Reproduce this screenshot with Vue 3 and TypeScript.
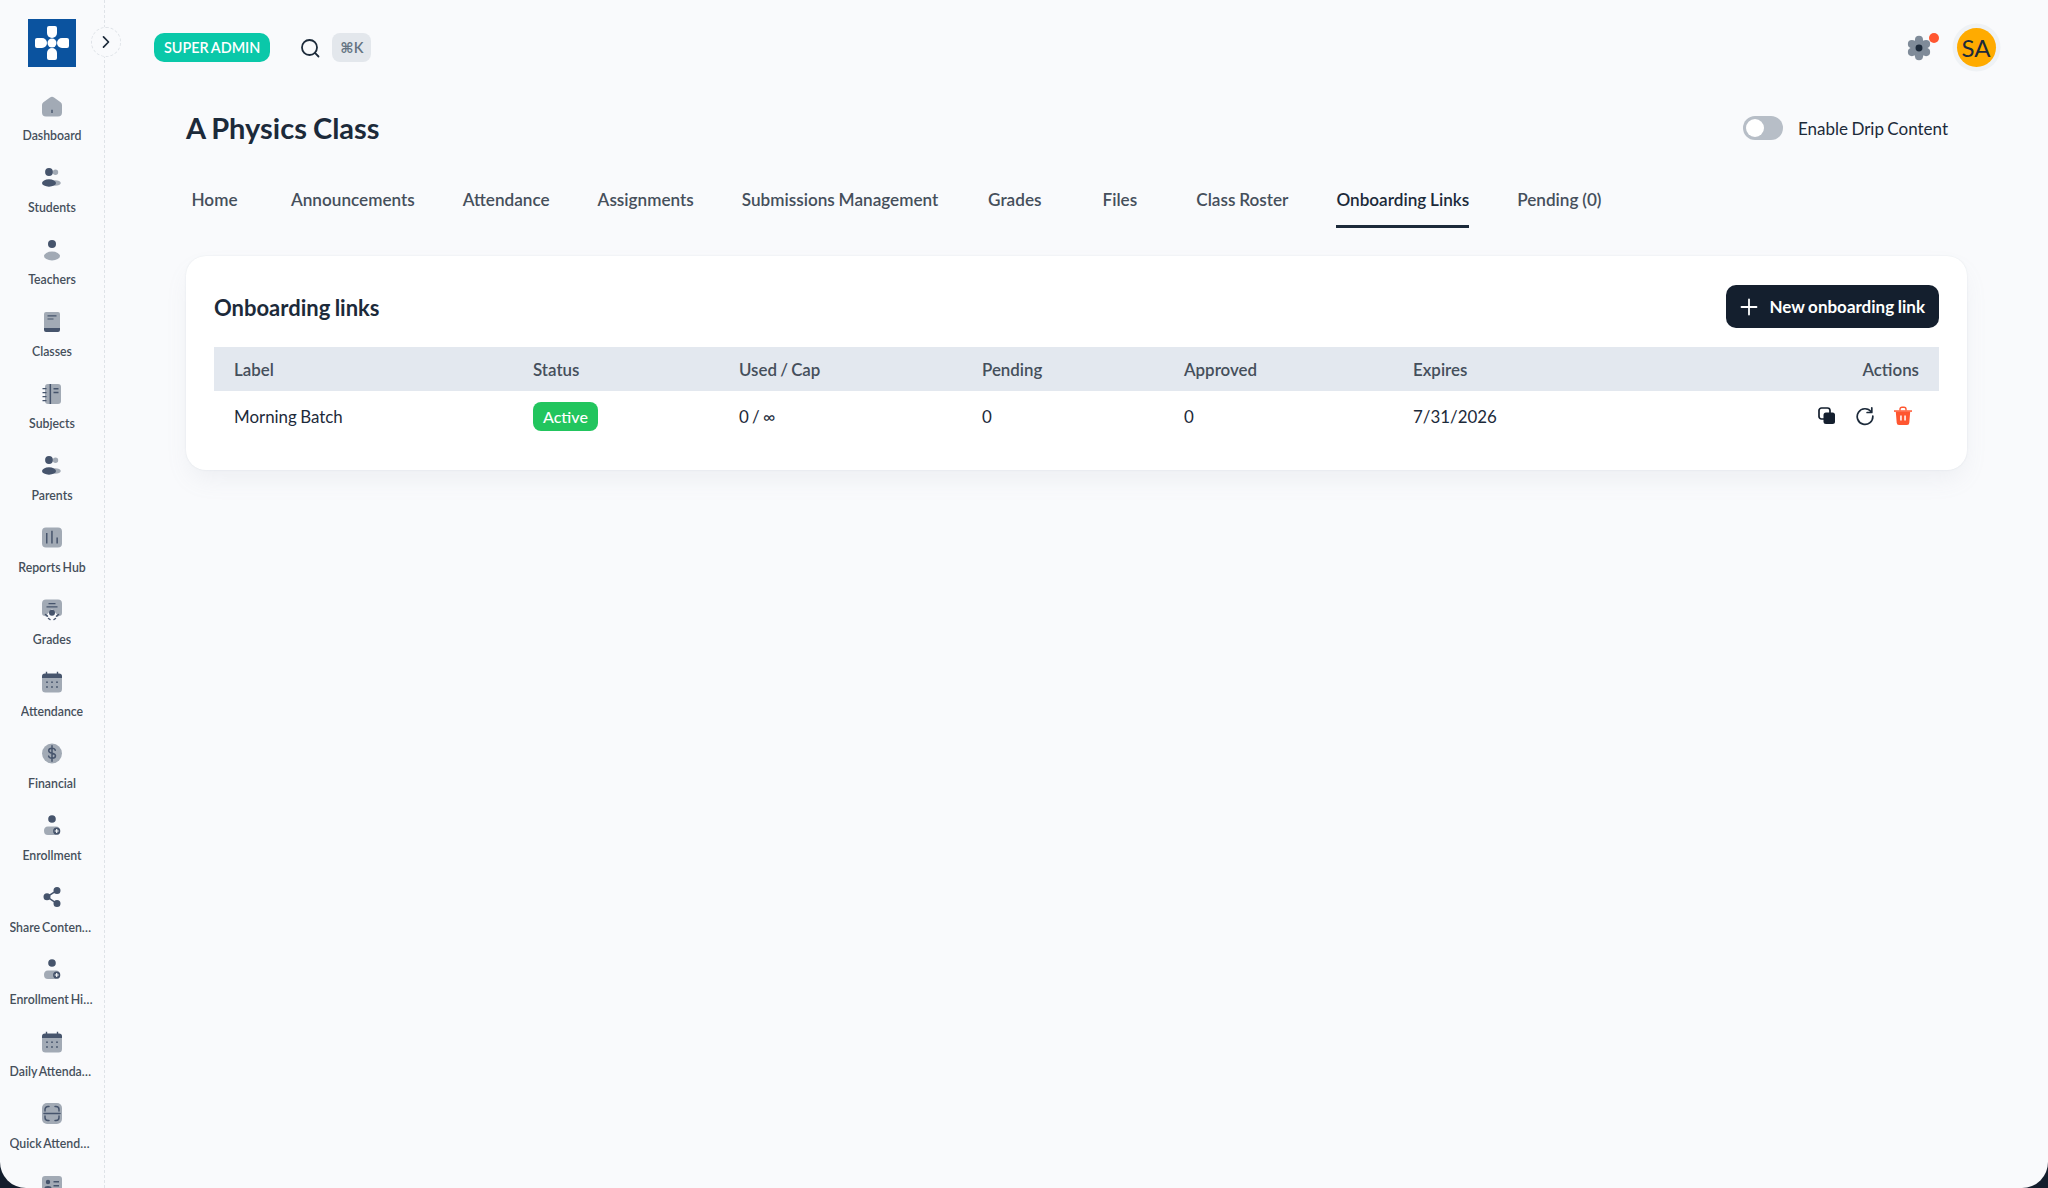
<script setup lang="ts">
interface NavItem {
  label: string
  light?: string
  dark?: string
  line?: string
  cut?: string
}

const dot = (cx: number, cy: number, r: number, ry = r) =>
  `M${cx - r} ${cy}a${r} ${ry} 0 1 0 ${r * 2} 0a${r} ${ry} 0 1 0 ${-r * 2} 0Z`

const people = {
  light: dot(15.5, 6.3, 2.7) + dot(15.2, 17, 5.6, 2.8),
  dark: dot(9, 6, 3.9) + dot(9, 17, 7, 3.7),
}
const enroll = {
  light: 'M8 12.5h8a4.2 4.2 0 0 1 4 4.2a4.2 4.2 0 0 1-4 4.3H8a4.2 4.2 0 0 1-4-4.3a4.2 4.2 0 0 1 4-4.2Z',
  dark: dot(12, 5, 3.8) + dot(16.7, 17, 3.6),
  cut: 'M16.1 15h1.2v1.4h1.4v1.2h-1.4V19h-1.2v-1.4h-1.4v-1.2h1.4Z',
}
const calendar = {
  light: 'M5 4h14a3 3 0 0 1 3 3v12a3.5 3.5 0 0 1-3.5 3.5h-13A3.5 3.5 0 0 1 2 19V7a3 3 0 0 1 3-3Z',
  dark:
    'M2 8V6.5A3 3 0 0 1 5 3.5h.8V1.8h1.4v1.7h9.6V1.8h1.4v1.7h.8a3 3 0 0 1 3 3V8Z' +
    dot(7, 12.2, 0.9) + dot(12, 12.2, 0.9) + dot(17, 12.2, 0.9) +
    dot(7, 17, 0.9) + dot(12, 17, 0.9) + dot(17, 17, 0.9),
}

const navItems: NavItem[] = [
  {
    label: 'Dashboard',
    light: 'M10 3.6a3.2 3.2 0 0 1 4 0l6.6 4.6A3.4 3.4 0 0 1 22 11v7.5a4 4 0 0 1-4 4H6a4 4 0 0 1-4-4V11a3.4 3.4 0 0 1 1.4-2.8Z',
    dark: 'M11.3 15.8h1.4v3.2h-1.4Z',
  },
  { label: 'Students', ...people },
  { label: 'Teachers', light: dot(12, 18, 8, 4.4), dark: dot(12, 6, 4) },
  {
    label: 'Classes',
    light: 'M6 2h12a2 2 0 0 1 2 2v15H4V4a2 2 0 0 1 2-2Z',
    dark: 'M7.5 5.2h9v1.2h-9ZM7.5 8.4h6v1.2h-6ZM4 18h16v2a2 2 0 0 1-2 2H6a2 2 0 0 1-2-2Z',
  },
  {
    label: 'Subjects',
    light: 'M8 2h10a3 3 0 0 1 3 3v14a3 3 0 0 1-3 3H8a3 3 0 0 1-3-3V5a3 3 0 0 1 3-3Z',
    dark: 'M9.6 2h1.5v20H9.6ZM13.5 6h5v1.4h-5ZM13.5 9.8h5v1.4h-5ZM2.5 6h4v1.3h-4ZM2.5 10h4v1.3h-4ZM2.5 14h4v1.3h-4ZM2.5 18h4v1.3h-4Z',
  },
  { label: 'Parents', ...people },
  {
    label: 'Reports Hub',
    light: 'M6 1.5h12a4 4 0 0 1 4 4v12a4 4 0 0 1-4 4H6a4 4 0 0 1-4-4v-12a4 4 0 0 1 4-4Z',
    dark: 'M6 7h1.5v10.5H6ZM11.2 4.8h1.5v12.7h-1.5ZM16.4 11.5h1.5v6h-1.5Z',
  },
  {
    label: 'Grades',
    light: 'M6 1.5h12a4 4 0 0 1 4 4v9.5a3 3 0 0 1-3 3l-2 1v-2.5L12 11l-5 5.500V19l-2-1a3 3 0 0 1-3-3V5.500a4 4 0 0 1 4-4Z',
    dark: 'M8.500 5h7v1.200h-7ZM6.500 8.300h11v1.200h-11Z' + dot(12, 14.800, 3),
    line: 'M5.500 16.500l2 1.600M18.500 16.500l-2 1.600M8.500 20.500l1.500 1M15.500 20.500l-1.500 1',
  },
  { label: 'Attendance', ...calendar },
  {
    label: 'Financial',
    light: dot(12, 11.5, 10),
    line: 'M15.300 8.300c-.4-1.300-1.700-2-3.300-2c-1.900 0-3.300 1-3.300 2.500c0 3.400 6.800 1.500 6.800 5c0 1.500-1.500 2.500-3.500 2.500c-1.700 0-3-.8-3.400-2.200M12 3.800v15.500',
  },
  { label: 'Enrollment', ...enroll },
  {
    label: 'Share Content Links',
    dark: dot(17, 4.4, 3.5) + dot(17, 17.6, 3.5) + dot(7, 10.800, 3.5),
    line: 'M17 4.400L7 10.800L17 17.600',
  },
  { label: 'Enrollment History', ...enroll },
  { label: 'Daily Attendance', ...calendar },
  {
    label: 'Quick Attendance',
    light: 'M7 1h10a5 5 0 0 1 5 5v11a5 5 0 0 1-5 5H7a5 5 0 0 1-5-5V6a5 5 0 0 1 5-5Z',
    line: 'M9 4.500H8a3 3 0 0 0-3 3v1.500M15 4.500h1a3 3 0 0 1 3 3v1.500M9 18.500H8a3 3 0 0 1-3-3V14M15 18.500h1a3 3 0 0 0 3-3V14M4 11.500h16',
  },
  {
    label: 'ID Cards',
    light: 'M5 2h14a3 3 0 0 1 3 3v12a3 3 0 0 1-3 3H5a3 3 0 0 1-3-3V5a3 3 0 0 1 3-3Z',
    dark: dot(8, 8, 2.200) + dot(8, 14, 3.500, 2) + 'M13.500 7h5.500v1.400h-5.500ZM13.500 11h5.500v1.400h-5.500Z',
  },
]

const tabs = [
  'Home',
  'Announcements',
  'Attendance',
  'Assignments',
  'Submissions Management',
  'Grades',
  'Files',
  'Class Roster',
  'Onboarding Links',
  'Pending (0)',
]
const activeTab = 'Onboarding Links'

const gearPetals = [0, 60, 120, 180, 240, 300].map((deg) => {
  const rad = (deg * Math.PI) / 180
  return { x: 12 + 7.6 * Math.sin(rad), y: 12 - 7.6 * Math.cos(rad) }
})
</script>

<template>
  <div class="app">
    <aside class="sidebar">
      <div class="logo">
        <svg width="48" height="48" viewBox="0 0 48 48">
          <rect width="48" height="48" fill="#0b539f" />
          <g fill="#fff">
            <circle cx="24" cy="24" r="4.500" />
            <path d="M21 7h6a2 2 0 0 1 2 2v5a5 5 0 0 1-10 0V9a2 2 0 0 1 2-2Z" />
            <path d="M21 41h6a2 2 0 0 0 2-2v-5a5 5 0 0 0-10 0v5a2 2 0 0 0 2 2Z" />
            <path d="M9 19h5a5 5 0 0 1 0 10H9a2 2 0 0 1-2-2v-6a2 2 0 0 1 2-2Z" />
            <path d="M39 19h-5a5 5 0 0 0 0 10h5a2 2 0 0 0 2-2v-6a2 2 0 0 0-2-2Z" />
          </g>
        </svg>
      </div>
      <button class="collapse" type="button">
        <svg width="12" height="14" viewBox="0 0 12 14">
          <path d="M3.500 1.800L8.500 7L3.500 12.200" fill="none" stroke="#1c2a3a" stroke-width="1.700" stroke-linecap="round" stroke-linejoin="round" />
        </svg>
      </button>
      <nav class="nav">
        <a v-for="item in navItems" :key="item.label" class="nav-item">
          <svg class="nav-icon" width="24" height="24" viewBox="0 0 24 24">
            <path v-if="item.light" :d="item.light" fill="#a2aab5" />
            <path v-if="item.dark" :d="item.dark" fill="#46546c" />
            <path v-if="item.line" :d="item.line" fill="none" stroke="#46546c" stroke-width="1.500" stroke-linecap="round" />
            <path v-if="item.cut" :d="item.cut" fill="#f9fafc" />
          </svg>
          <span class="nav-label">{{ item.label }}</span>
        </a>
      </nav>
    </aside>

    <div class="main">
      <header class="topbar">
        <span class="role">SUPER ADMIN</span>
        <button class="search" type="button">
          <svg width="24" height="24" viewBox="0 0 24 24">
            <circle cx="11.500" cy="11.500" r="7.500" fill="none" stroke="#1c2a3a" stroke-width="1.800" />
            <path d="M17.200 17.200L20.500 20.500" stroke="#1c2a3a" stroke-width="1.800" stroke-linecap="round" />
          </svg>
        </button>
        <kbd class="shortcut">⌘K</kbd>
        <div class="topbar-right">
          <span class="settings">
            <svg width="26" height="26" viewBox="0 0 24 24">
              <circle cx="12" cy="12" r="8" fill="#7f8b99" />
              <circle v-for="(p, i) in gearPetals" :key="i" :cx="p.x" :cy="p.y" r="3.700" fill="#7f8b99" />
              <circle cx="12" cy="12" r="3.200" fill="#1c2a3a" />
            </svg>
            <i class="settings-dot"></i>
          </span>
          <span class="avatar">SA</span>
        </div>
      </header>

      <main class="page">
        <div class="title-row">
          <h1 class="title">A Physics Class</h1>
          <label class="drip">
            <span class="switch"><i></i></span>
            Enable Drip Content
          </label>
        </div>

        <div class="tabs">
          <a v-for="tab in tabs" :key="tab" class="tab" :class="{ active: tab === activeTab }">{{ tab }}</a>
        </div>

        <section class="card">
          <div class="card-head">
            <h2>Onboarding links</h2>
            <button class="new-link" type="button">
              <svg width="18" height="18" viewBox="0 0 18 18">
                <path d="M9 1.500v15M1.500 9h15" stroke="#fff" stroke-width="1.800" stroke-linecap="round" />
              </svg>
              New onboarding link
            </button>
          </div>
          <table class="links">
            <colgroup>
              <col style="width: 299px" />
              <col style="width: 206px" />
              <col style="width: 243px" />
              <col style="width: 202px" />
              <col style="width: 229px" />
              <col />
              <col style="width: 200px" />
            </colgroup>
            <thead>
              <tr>
                <th>Label</th>
                <th>Status</th>
                <th>Used / Cap</th>
                <th>Pending</th>
                <th>Approved</th>
                <th>Expires</th>
                <th class="right">Actions</th>
              </tr>
            </thead>
            <tbody>
              <tr>
                <td>Morning Batch</td>
                <td><span class="status">Active</span></td>
                <td>0 / ∞</td>
                <td>0</td>
                <td>0</td>
                <td>7/31/2026</td>
                <td>
                  <div class="actions">
                    <button type="button">
                      <svg width="20" height="20" viewBox="0 0 20 20">
                        <rect x="2" y="2" width="11" height="11" rx="2.500" fill="none" stroke="#141f2e" stroke-width="1.700" />
                        <rect x="6.500" y="6.500" width="11.500" height="11.500" rx="2.500" fill="#141f2e" />
                      </svg>
                    </button>
                    <button type="button">
                      <svg width="20" height="20" viewBox="0 0 20 20">
                        <path d="M16.200 5.800A7.800 7.800 0 1 0 17.800 10" fill="none" stroke="#1c2a3a" stroke-width="1.700" stroke-linecap="round" />
                        <path d="M16.800 1.800v4.700h-4.700" fill="none" stroke="#1c2a3a" stroke-width="1.700" stroke-linecap="round" stroke-linejoin="round" />
                      </svg>
                    </button>
                    <button type="button">
                      <svg width="20" height="20" viewBox="0 0 20 20">
                        <path d="M7 4.500V3.200a2 2 0 0 1 2-2h2a2 2 0 0 1 2 2v1.300" fill="none" stroke="#ff5630" stroke-width="1.400" />
                        <path d="M1 4.300h18v1.500H1Z" fill="#ff5630" />
                        <path d="M2.800 5.800h14.400l-.9 11a2.300 2.300 0 0 1-2.300 2.200H6a2.300 2.300 0 0 1-2.300-2.200Z" fill="#ff5630" />
                        <path d="M7.200 9.500h1.500v5H7.200ZM11.300 9.500h1.500v5h-1.500Z" fill="#fff" />
                      </svg>
                    </button>
                  </div>
                </td>
              </tr>
            </tbody>
          </table>
        </section>
      </main>
    </div>
  </div>
</template>

<style>
html,
body {
  margin: 0;
  height: 100%;
  background: #141e2d;
}
</style>

<style scoped>
.app {
  display: flex;
  position: relative;
  height: 100vh;
  overflow: hidden;
  background: #f9fafc;
  border-radius: 0 0 26px 26px;
  font-family: Lato, "DejaVu Sans", sans-serif;
  color: #1c2a3a;
  word-spacing: -1px;
}

.sidebar {
  position: relative;
  flex: 0 0 105px;
  box-sizing: border-box;
  padding-top: 19px;
  border-right: 1px dashed #dfe3e8;
}

.logo {
  display: flex;
  justify-content: center;
  height: 48px;
  margin-bottom: 17px;
}

.collapse {
  position: absolute;
  top: 27px;
  left: 91px;
  width: 30px;
  height: 30px;
  display: flex;
  align-items: center;
  justify-content: center;
  padding: 0;
  background: #f9fafc;
  border: 1px dashed #dfe3e8;
  border-radius: 50%;
  z-index: 2;
}

.nav-item {
  display: flex;
  flex-direction: column;
  align-items: center;
  box-sizing: border-box;
  height: 72px;
  padding-top: 10px;
}

.nav-icon {
  flex: none;
}

.nav-label {
  max-width: 85px;
  margin-top: 9px;
  overflow: hidden;
  font-size: 12.3px;
  font-weight: 600;
  line-height: 18px;
  color: #454f5b;
  white-space: nowrap;
  text-overflow: ellipsis;
}

.main {
  flex: 1;
  min-width: 0;
}

.topbar {
  display: flex;
  align-items: center;
  height: 95px;
  padding: 0 52.5px 0 49px;
}

.role {
  display: flex;
  align-items: center;
  height: 29px;
  padding: 0 10px;
  background: #0ac8a9;
  border-radius: 10px;
  color: #fff;
  font-size: 14.4px;
  font-weight: 600;
}

.search {
  display: flex;
  margin-left: 28px;
  padding: 0;
  background: none;
  border: 0;
}

.shortcut {
  display: flex;
  align-items: center;
  height: 29px;
  margin-left: 10px;
  padding: 0 8px;
  background: #e3e7ec;
  border-radius: 8px;
  color: #637381;
  font-family: Lato, "DejaVu Sans", sans-serif;
  font-size: 14.4px;
  font-weight: 600;
}

.topbar-right {
  display: flex;
  align-items: center;
  gap: 25px;
  margin-left: auto;
}

.settings {
  position: relative;
  display: flex;
}

.settings-dot {
  position: absolute;
  top: -2px;
  right: -7px;
  width: 10px;
  height: 10px;
  background: #ff5630;
  border-radius: 50%;
}

.avatar {
  display: flex;
  align-items: center;
  justify-content: center;
  width: 39px;
  height: 39px;
  background: #ffab00;
  border-radius: 50%;
  box-shadow: 0 0 0 4.500px #eff2f5;
  font-size: 24px;
}

.page {
  padding: 13px 81px 0;
}

.title-row {
  display: flex;
  align-items: center;
  justify-content: space-between;
  height: 40px;
  padding-right: 19px;
}

.title {
  margin: 0;
  font-size: 29px;
  font-weight: 700;
  line-height: 40px;
}

.drip {
  display: flex;
  align-items: center;
  gap: 15px;
  font-size: 17px;
}

.switch {
  display: flex;
  align-items: center;
  width: 40px;
  height: 24px;
  box-sizing: border-box;
  padding-left: 3px;
  background: #b7bec7;
  border-radius: 12px;
}

.switch i {
  width: 18px;
  height: 18px;
  background: #fff;
  border-radius: 50%;
}

.tabs {
  display: flex;
  gap: 48px;
  margin-top: 24px;
}

.tab {
  box-sizing: border-box;
  min-width: 57px;
  height: 56px;
  border-bottom: 3px solid transparent;
  color: #454f5b;
  font-size: 17.15px;
  font-weight: 600;
  line-height: 55px;
  text-align: center;
  word-spacing: -0.5px;
}

.tab.active {
  border-bottom-color: #1c2a3a;
  color: #1c2a3a;
}

.card {
  margin-top: 28px;
  padding: 29px 28px 28px;
  background: #fff;
  border-radius: 20px;
  box-shadow: 0 0 2px rgba(145, 158, 171, 0.2), 0 12px 24px -4px rgba(145, 158, 171, 0.12);
}

.card-head {
  display: flex;
  align-items: center;
  justify-content: space-between;
  margin-bottom: 19px;
}

.card-head h2 {
  margin: 1px 0 0;
  font-size: 22px;
  font-weight: 700;
}

.new-link {
  display: flex;
  align-items: center;
  gap: 11px;
  height: 43px;
  padding: 0 14px;
  background: #141f2e;
  border: 0;
  border-radius: 10px;
  color: #fff;
  font-family: inherit;
  font-size: 17px;
  font-weight: 700;
  word-spacing: -0.5px;
}

.links {
  width: 100%;
  border-collapse: collapse;
  table-layout: fixed;
  font-size: 16.9px;
}

.links th {
  height: 44px;
  padding: 0 0 0 20px;
  background: #e3e8ef;
  color: #454f5b;
  font-weight: 600;
  text-align: left;
}

.links th.right {
  padding-right: 20px;
  text-align: right;
}

.links td {
  height: 50px;
  padding: 0 0 1px 20px;
}

.status {
  display: inline-flex;
  align-items: center;
  height: 29px;
  padding: 0 10px;
  background: #22c55e;
  border-radius: 8px;
  color: #fff;
  font-size: 16px;
  font-weight: 500;
}

.actions {
  display: flex;
  justify-content: flex-end;
  gap: 6px;
  padding-right: 20px;
}

.actions button {
  display: flex;
  align-items: center;
  justify-content: center;
  width: 32px;
  height: 32px;
  padding: 0;
  background: none;
  border: 0;
}
</style>
